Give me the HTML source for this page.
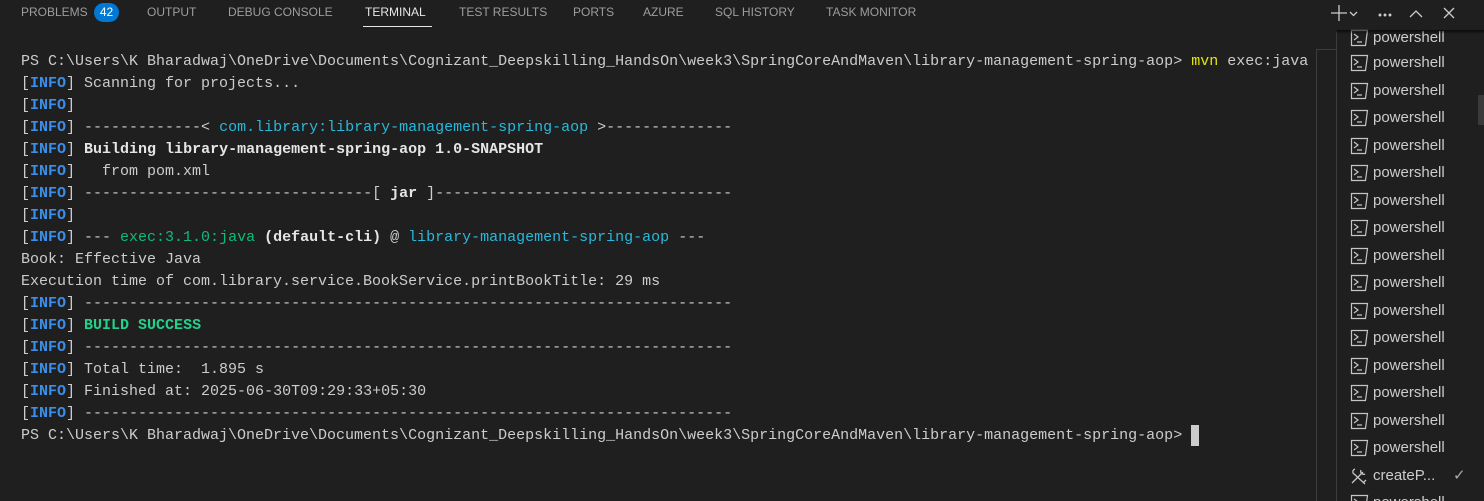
<!DOCTYPE html>
<html><head><meta charset="utf-8"><style>
html,body{margin:0;padding:0;width:1484px;height:501px;background:#1f1f1f;overflow:hidden;position:relative;font-family:"Liberation Sans",sans-serif}
.tab{position:absolute;top:5px;font-size:12px;color:#9d9d9d;letter-spacing:0}
.badge{position:absolute;left:94px;top:3px;width:25px;height:19px;border-radius:10px;background:#0078d4;color:#fff;font-size:12px;text-align:center;line-height:19px}
pre{position:absolute;left:21px;top:51px;margin:0;font-family:"Liberation Mono",monospace;font-size:15px;line-height:22px;color:#cccccc}
.b{color:#cccccc}.i{color:#3b8eea;font-weight:bold}.c{color:#29b8db}.g{color:#0dbc79}.s{color:#23d18b;font-weight:bold}.y{color:#e5e510}.w{font-weight:bold;color:#e5e5e5}
.list{position:absolute;left:1336px;top:30px;width:148px;height:471px;border-left:1px solid #3c3c3c}
.item{position:absolute;left:12px;height:22px;font-size:15px;color:#cccccc;line-height:22px}
.item svg{position:absolute;left:0;top:2px}
.item span{position:absolute;left:24px;white-space:nowrap}
</style></head><body>
<div class="tab" style="left:21px">PROBLEMS</div><div class="badge">42</div>
<div class="tab" style="left:147px">OUTPUT</div>
<div class="tab" style="left:228px">DEBUG CONSOLE</div>
<div class="tab" style="left:365px;color:#e7e7e7">TERMINAL</div>
<div style="position:absolute;left:363px;top:26px;width:69px;height:1px;background:#e7e7e7"></div>
<div class="tab" style="left:459px">TEST RESULTS</div>
<div class="tab" style="left:573px">PORTS</div>
<div class="tab" style="left:643px">AZURE</div>
<div class="tab" style="left:715px">SQL HISTORY</div>
<div class="tab" style="left:826px">TASK MONITOR</div>
<svg style="position:absolute;left:1328px;top:3px" width="150" height="20" fill="none" stroke="#cccccc" stroke-width="1.3">
<path d="M3 10h16M11 2v16"/><path d="M22 9l3.5 3.5L29 9"/>
<circle cx="52" cy="12" r="0.8" fill="#ccc"/><circle cx="57" cy="12" r="0.8" fill="#ccc"/><circle cx="62" cy="12" r="0.8" fill="#ccc"/>
<path d="M82 14l6-6 6 6"/><path d="M116 5l10 10M126 5l-10 10"/>
</svg>
<div style="position:absolute;left:1316px;top:49px;width:20px;height:1px;background:#3c3c3c"></div>
<div style="position:absolute;left:1316px;top:49px;width:1px;height:452px;background:#3c3c3c"></div>
<pre>PS C:\Users\K Bharadwaj\OneDrive\Documents\Cognizant_Deepskilling_HandsOn\week3\SpringCoreAndMaven\library-management-spring-aop&gt; <span class="y">mvn</span> exec:java
[<span class="i">INFO</span>] Scanning for projects...
[<span class="i">INFO</span>]
[<span class="i">INFO</span>] -------------&lt; <span class="c">com.library:library-management-spring-aop</span> &gt;--------------
[<span class="i">INFO</span>] <span class="w">Building library-management-spring-aop 1.0-SNAPSHOT</span>
[<span class="i">INFO</span>]   from pom.xml
[<span class="i">INFO</span>] --------------------------------[ <span class="w">jar</span> ]---------------------------------
[<span class="i">INFO</span>]
[<span class="i">INFO</span>] --- <span class="g">exec:3.1.0:java</span> <span class="w">(default-cli)</span> @ <span class="c">library-management-spring-aop</span> ---
Book: Effective Java
Execution time of com.library.service.BookService.printBookTitle: 29 ms
[<span class="i">INFO</span>] ------------------------------------------------------------------------
[<span class="i">INFO</span>] <span class="s">BUILD SUCCESS</span>
[<span class="i">INFO</span>] ------------------------------------------------------------------------
[<span class="i">INFO</span>] Total time:  1.895 s
[<span class="i">INFO</span>] Finished at: 2025-06-30T09:29:33+05:30
[<span class="i">INFO</span>] ------------------------------------------------------------------------
PS C:\Users\K Bharadwaj\OneDrive\Documents\Cognizant_Deepskilling_HandsOn\week3\SpringCoreAndMaven\library-management-spring-aop&gt; </pre>
<div style="position:absolute;left:1191px;top:425px;width:8px;height:21px;background:#cccccc"></div>
<div class="list" id="l"></div>
<div style="position:absolute;left:1478px;top:95px;width:6px;height:30px;background:#3a3a3a"></div>
<div style="position:absolute;left:1336px;top:30px;width:148px;height:4px;background:linear-gradient(#000a,#0000)"></div>
<script>
var l=document.getElementById('l');
var ys=[-3,22,50,77,105,132,160,187,215,242,270,297,325,352,380,407,435,462];
var ic='<svg width="20" height="18" fill="none" stroke="#c5c5c5" stroke-width="1.2"><path d="M2.5 1.5h16l-2 15h-14z"/><path d="M5 5l4 3-4 3M8 13h5"/></svg>';
var tool='<svg width="20" height="18" fill="none" stroke="#c5c5c5" stroke-width="1.3"><path d="M3 16L14 5M12 3a3 3 0 0 0 4 4M6 2a3 3 0 0 0-2 4l12 11M17 13l-3 3"/></svg>';
ys.forEach(function(y,k){var d=document.createElement('div');d.className='item';d.style.top=y+'px';
if(k==16){d.innerHTML=tool+'<span>createP...</span><span style="left:104px;color:#aaa">✓</span>';}
else d.innerHTML=ic+'<span>powershell</span>';l.appendChild(d);});
</script>
</body></html>
